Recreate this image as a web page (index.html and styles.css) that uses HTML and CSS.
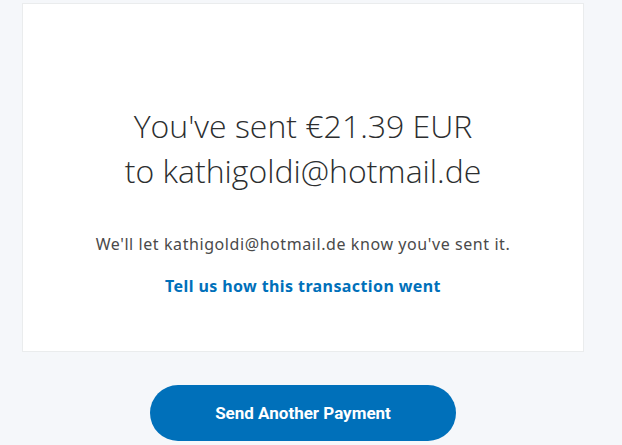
FILE: index.html
```html
<!DOCTYPE html>
<html>
<head>
<meta charset="utf-8">
<link rel="stylesheet" href="styles.css">
</head>
<body>
<main class="page">
  <section class="card">
    <h1 class="title">You've sent €21.39 EUR<br>to kathigoldi@hotmail.de</h1>
    <p class="note">We'll let kathigoldi@hotmail.de know you've sent it.</p>
    <a class="feedback" href="#">Tell us how this transaction went</a>
  </section>
  <div class="actions">
    <button class="primary">Send Another Payment</button>
  </div>
</main>
</body>
</html>
```
FILE: styles.css
```css
html, body {
  margin: 0;
  padding: 0;
  background: #f5f7fa;
}
.page {
  width: 562px;
  margin-left: 22px;
  padding-top: 3px;
}
.card {
  box-sizing: border-box;
  height: 349px;
  background: #ffffff;
  border: 1px solid #eaeced;
  display: flex;
  flex-direction: column;
  align-items: center;
  padding-top: 99px;
}
.title {
  margin: 0;
  font-family: "Open Sans", sans-serif;
  font-weight: 300;
  font-size: 32px;
  line-height: 45px;
  color: #2c2e2f;
  text-align: center;
  letter-spacing: 0;
}
.note {
  margin: 40px 0 0;
  font-family: "Noto Sans", sans-serif;
  font-size: 16px;
  line-height: 22px;
  letter-spacing: 0.58px;
  color: #4a4a4a;
}
.feedback {
  margin-top: 20px;
  font-family: "Noto Sans", sans-serif;
  font-weight: 700;
  font-size: 16px;
  line-height: 22px;
  letter-spacing: 0.4px;
  color: #0070ba;
  text-decoration: none;
}
.actions {
  display: flex;
  justify-content: center;
  padding-top: 33px;
}
.primary {
  width: 306px;
  height: 56px;
  border: none;
  border-radius: 28px;
  background: #0070ba;
  color: #ffffff;
  font-family: "Roboto", sans-serif;
  font-weight: 700;
  font-size: 17px;
  cursor: pointer;
}
```
